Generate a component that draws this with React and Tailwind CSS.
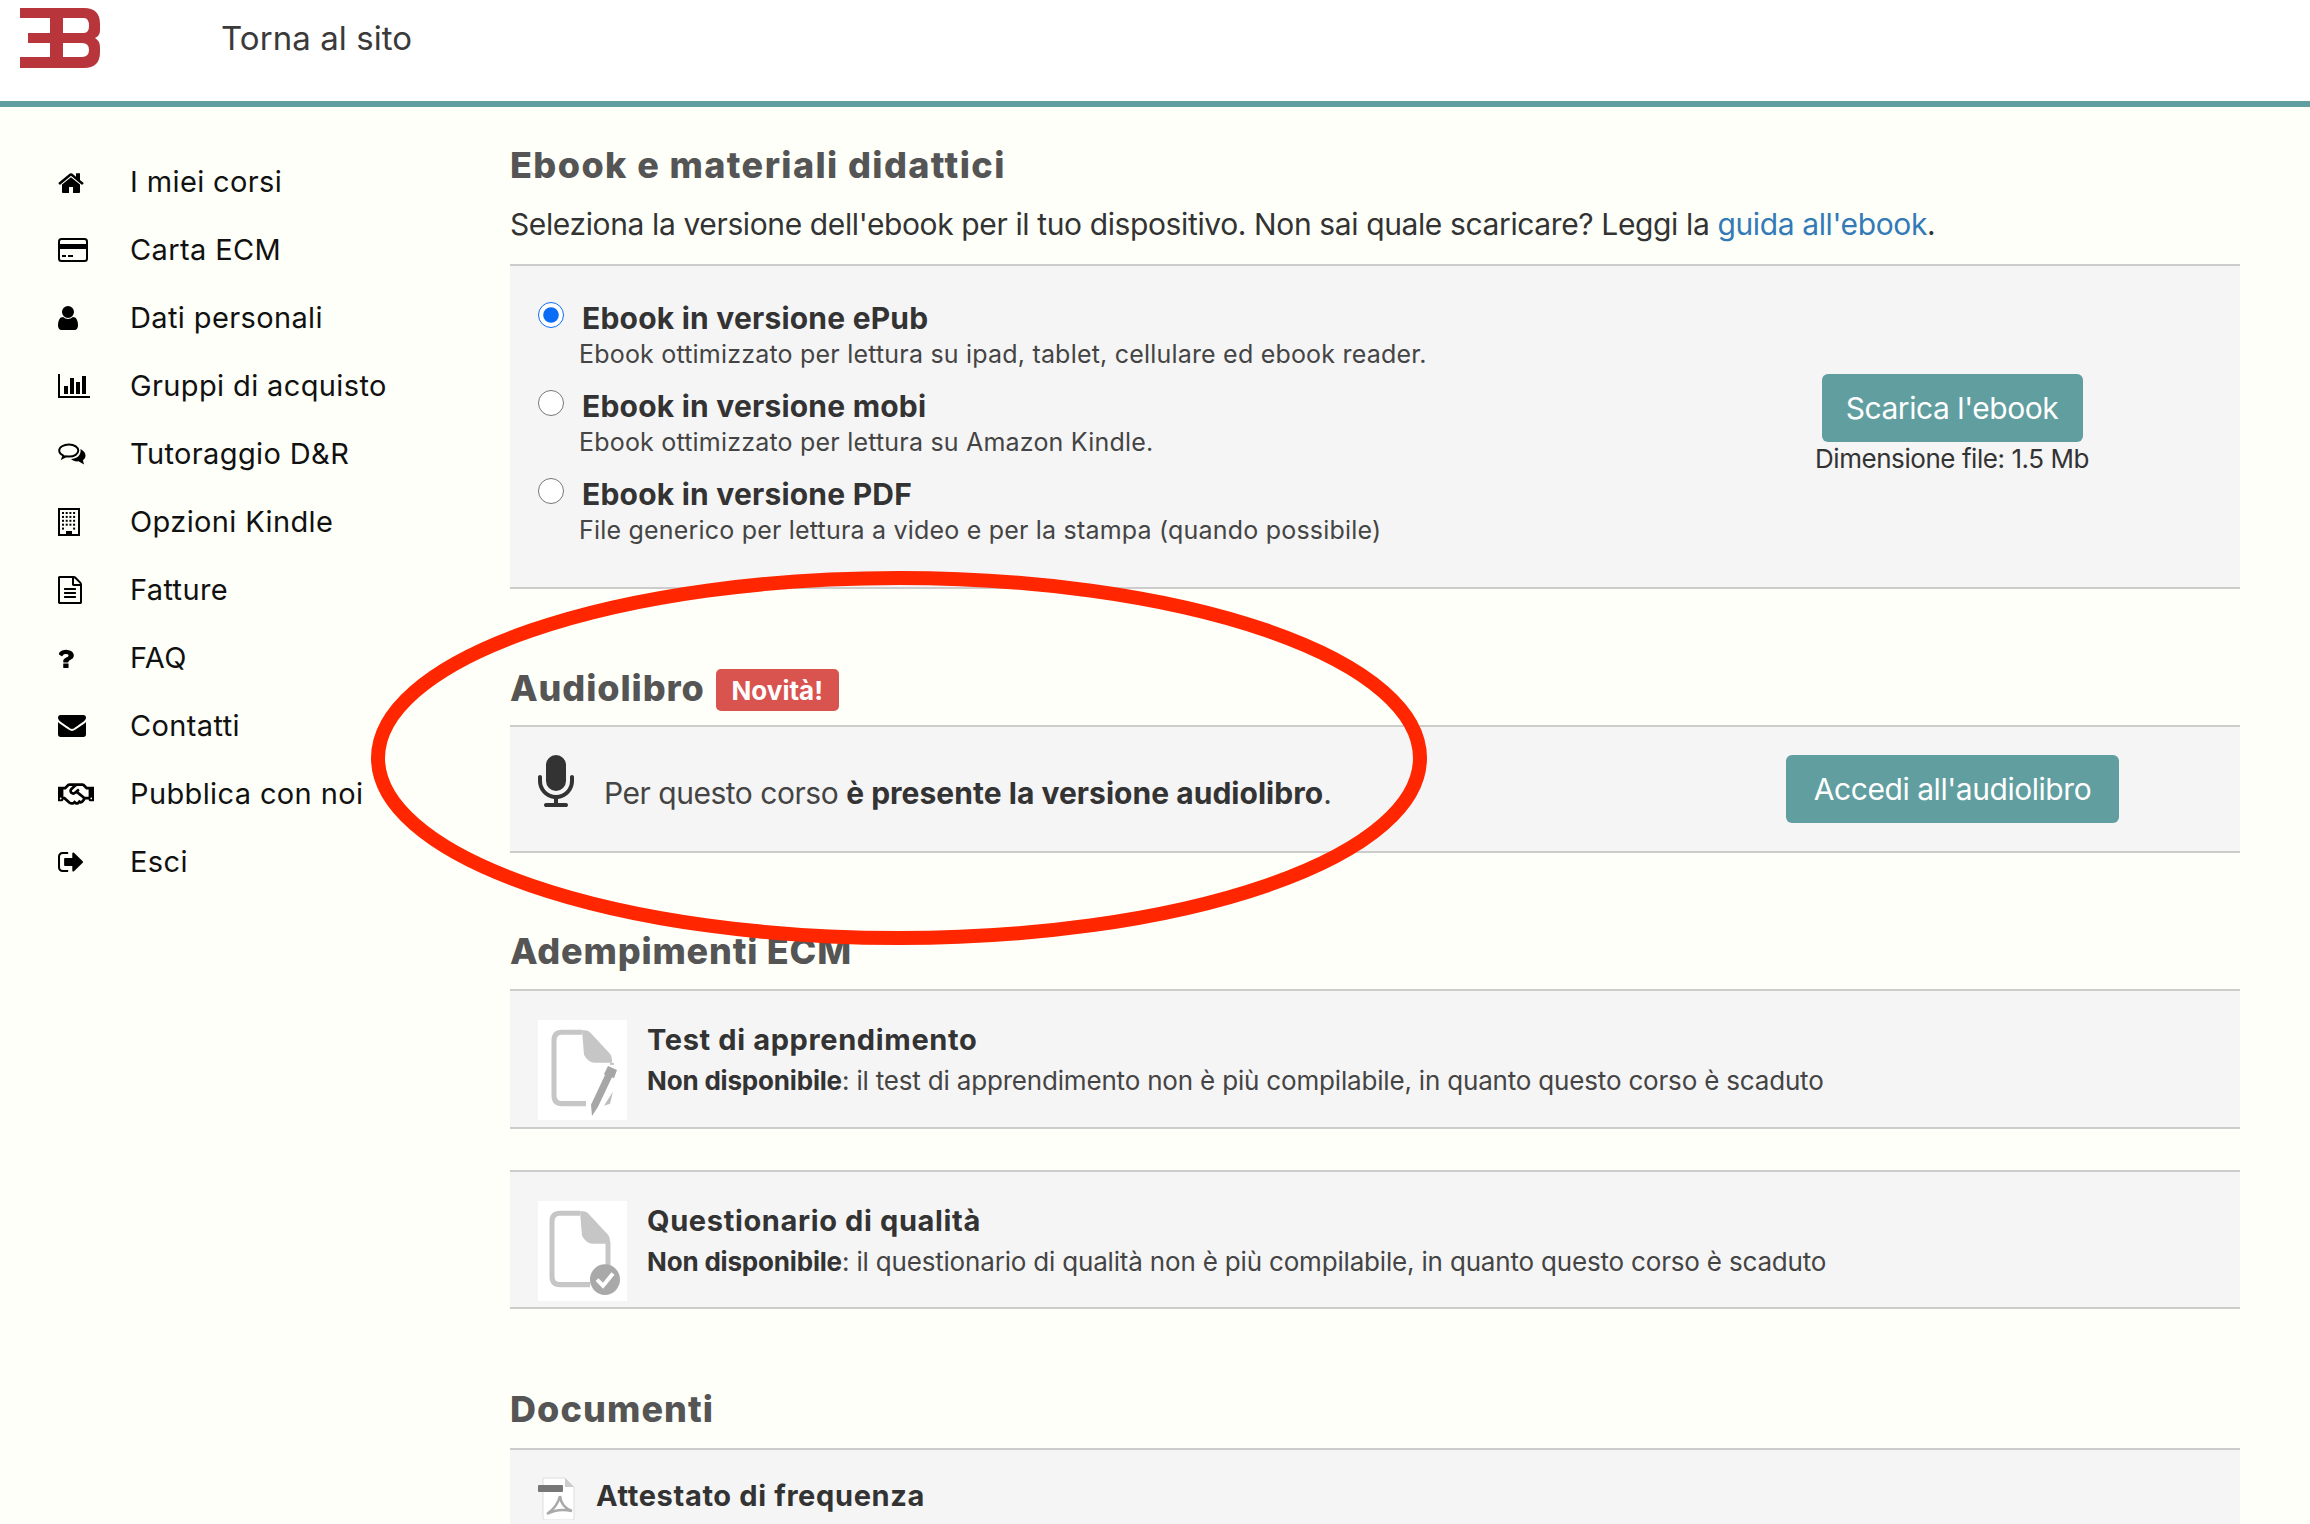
import React from 'react';
import { FaRegHandshake } from 'react-icons/fa';

// Font Awesome 4 style glyphs, drawn inline
const glyphs = {
    home: { box: '64 180 1664 1360', d: 'M1472 992v480q0 26-19 45t-45 19h-384v-384h-256v384h-384q-26 0-45-19t-19-45v-480q0-1 .5-3t.5-3l575-474 575 474q1 2 1 6zm223-69l-62 74q-8 9-21 11h-3q-13 0-21-7l-692-577-692 577q-12 8-24 7-13-2-21-11l-62-74q-8-10-7-23.5t11-21.5l719-599q32-26 76-26t76 26l244 204v-195q0-14 9-23t23-9h192q14 0 23 9t9 23v408l219 182q10 8 11 21.5t-7 23.5z' },
    user: { box: '256 128 1280 1536', d: 'M1536 1399q0 109-62.5 187t-150.5 78h-854q-88 0-150.5-78t-62.5-187q0-85 8.5-160.5t31.5-152 58.5-131 94-89 134.5-34.5q131 128 313 128t313-128q76 0 134.5 34.5t94 89 58.5 131 31.5 152 8.5 160.5zm-256-887q0 159-112.5 271.5t-271.5 112.5-271.5-112.5-112.5-271.5 112.5-271.5 271.5-112.5 271.5 112.5 112.5 271.5z' },
    chart: { box: '0 128 2048 1536', d: 'M640 896v512h-256v-512h256zm384-512v1024h-256v-1024h256zm1024 1152v128h-2048v-1536h128v1408h1920zm-640-896v768h-256v-768h256zm384-384v1152h-256v-1152h256z' },
    file: { box: '128 0 1536 1792', d: 'M1596 380q28 28 48 76t20 88v1152q0 40-28 68t-68 28h-1344q-40 0-68-28t-28-68v-1600q0-40 28-68t68-28h896q40 0 88 20t76 48zm-444-244v376h376q-10-29-22-41l-313-313q-12-12-41-22zm384 1528v-1024h-416q-40 0-68-28t-28-68v-416h-768v1536h1280zm-1024-864q0-14 9-23t23-9h704q14 0 23 9t9 23v64q0 14-9 23t-23 9h-704q-14 0-23-9t-9-23v-64zm736 224q14 0 23 9t9 23v64q0 14-9 23t-23 9h-704q-14 0-23-9t-9-23v-64q0-14 9-23t23-9h704zm0 256q14 0 23 9t9 23v64q0 14-9 23t-23 9h-704q-14 0-23-9t-9-23v-64q0-14 9-23t23-9h704z' },
    question: { box: '450 256 900 1400', d: 'M1024 1376v240q0 16-12 28t-28 12h-240q-16 0-28-12t-12-28v-240q0-16 12-28t28-12h240q16 0 28 12t12 28zm316-600q0 54-15.5 101t-35 76.5-55 59.5-57.5 43.5-61 35.5q-41 23-68.5 65t-27.5 67q0 17-12 32.5t-28 15.5h-240q-15 0-25.5-18.5t-10.5-37.5v-45q0-83 65-156.5t143-108.5q59-27 84-56t25-76q0-42-46.5-74t-107.5-32q-65 0-108 29-35 25-107 115-13 16-31 16-12 0-25-8l-164-125q-13-10-15.5-25t5.5-28q160-266 464-266 80 0 161 31t146 83 106 127.5 41 158.5z' },
    envelope: { box: '0 256 1792 1408', d: 'M1792 710v794q0 66-47 113t-113 47h-1472q-66 0-113-47t-47-113v-794q44 49 101 87 362 246 497 345 57 42 92.5 65.5t94.5 48 110 24.5h2q51 0 110-24.5t94.5-48 92.5-65.5q170-123 498-345 57-39 100-87zm0-294q0 79-49 151t-122 123q-376 261-468 325-10 7-42.5 30.5t-54 38-52 32.5-57.5 27-50 9h-2q-23 0-50-9t-57.5-27-52-32.5-54-38-42.5-30.5q-91-64-262-182.5t-205-142.5q-62-42-117-115.5t-55-136.5q0-78 41.5-130t118.5-52h1472q65 0 112.5 47t47.5 113z' },
    exit: { box: '64 256 1568 1280', d: 'M704 1440q0 4 1 20t.5 26.5-3 23.5-10 19.5-20.5 6.5h-320q-119 0-203.5-84.5t-84.5-203.5v-704q0-119 84.5-203.5t203.5-84.5h320q13 0 22.5 9.5t9.5 22.5q0 4 1 20t.5 26.5-3 23.5-10 19.5-20.5 6.5h-320q-66 0-113 47t-47 113v704q0 66 47 113t113 47h312l11.5 1 11.5 3 8 5.5 7 9 2 13.5zm928-544q0 26-19 45l-544 544q-19 19-45 19t-45-19-19-45v-288h-448q-26 0-45-19t-19-45v-384q0-26 19-45t45-19h448v-288q0-26 19-45t45-19 45 19l544 544q19 19 19 45z' },
    mic: { box: '320 0 1152 1664', d: 'M1472 704v128q0 221-147.5 384.5t-364.5 187.5v132h256q26 0 45 19t19 45-19 45-45 19h-640q-26 0-45-19t-19-45 19-45 45-19h256v-132q-217-24-364.5-187.5t-147.5-384.5v-128q0-26 19-45t45-19 45 19 19 45v128q0 185 131.5 316.5t316.5 131.5 316.5-131.5 131.5-316.5v-128q0-26 19-45t45-19 45 19 19 45zm-256-384v512q0 132-94 226t-226 94-226-94-94-226v-512q0-132 94-226t226-94 226 94 94 226z' },
};

const Glyph = ({ name, className }) => (
    <svg viewBox={glyphs[name].box} className={className} preserveAspectRatio="none" fill="currentColor">
        <path d={glyphs[name].d} />
    </svg>
);

const CardIcon = () => (
    <svg viewBox="0 0 30 24" className="w-[30px] h-[24px]" fill="none">
        <rect x="1" y="1" width="28" height="22" rx="2.5" stroke="#000" strokeWidth="2" />
        <rect x="1" y="6" width="28" height="5" fill="#000" />
        <rect x="4" y="17" width="4" height="2" fill="#000" />
        <rect x="10" y="17" width="5" height="2" fill="#000" />
    </svg>
);

const CommentsIcon = () => (
    <svg viewBox="0 0 28 22" className="w-[28px] h-[22px]" fill="none">
        <path d="M11 1.500C5.500 1.500 1.200 4.200 1.200 7.600c0 2.200 1.700 4 4.200 5.100L4.600 15l3.300-1.700c1 .2 2 .3 3.100.3 5.500 0 9.300-2.700 9.300-6S16.500 1.500 11 1.500z" stroke="#000" strokeWidth="2" />
        <path d="M22.500 6c3.300 1.700 5 4 5 6.500 0 2-1 3.600-2.600 4.800l1.100 4.200-5.500-3.200c-2.500.4-5.500-.2-7.500-2.300 5.500 0 10.500-3.500 9.500-10z" fill="#000" />
    </svg>
);

const BuildingIcon = () => {
    const dots = [];
    for (let r = 0; r < 5; r++) {
        for (let c = 0; c < 4; c++) {
            if (r === 4 && (c === 1 || c === 2)) continue;
            dots.push(<rect key={`${r}-${c}`} x={4 + c * 3.7} y={4 + r * 3.9} width="2" height="2" fill="#000" />);
        }
    }
    return (
        <svg viewBox="0 0 22 28" className="w-[22px] h-[28px]" fill="none">
            <rect x="1" y="1" width="20" height="26" stroke="#000" strokeWidth="2" />
            {dots}
            <rect x="8" y="23" width="6" height="4" fill="#000" />
        </svg>
    );
};

const Logo = () => (
    <svg viewBox="20 8 80 60" className="w-[80px] h-[60px]">
        <path
            fillRule="evenodd"
            fill="#b7353b"
            d="M20 8H84Q100 8 100 24V30Q100 36 95 38Q100 41 100 47V52Q100 68 84 68H20V57H50V43H28V33H50V18H20ZM63 18V33H84Q89 33 89 26Q89 18 84 18ZM63 43V57H82Q89 57 89 50Q89 43 82 43Z"
        />
    </svg>
);

const menu = [
    { label: 'I miei corsi', icon: <Glyph name="home" className="w-[26px] h-[21px]" /> },
    { label: 'Carta ECM', icon: <CardIcon /> },
    { label: 'Dati personali', icon: <Glyph name="user" className="w-[20px] h-[24px]" /> },
    { label: 'Gruppi di acquisto', icon: <Glyph name="chart" className="w-[32px] h-[24px]" /> },
    { label: 'Tutoraggio D&R', icon: <CommentsIcon /> },
    { label: 'Opzioni Kindle', icon: <BuildingIcon /> },
    { label: 'Fatture', icon: <Glyph name="file" className="w-[24px] h-[28px]" /> },
    { label: 'FAQ', icon: <Glyph name="question" className="w-[15px] h-[20px] ml-[1px]" /> },
    { label: 'Contatti', icon: <Glyph name="envelope" className="w-[28px] h-[22px]" /> },
    { label: 'Pubblica con noi', icon: <FaRegHandshake className="w-[36px] h-[30px]" /> },
    { label: 'Esci', icon: <Glyph name="exit" className="w-[25px] h-[20px]" /> },
];

const ebooks = [
    { title: 'Ebook in versione ePub', text: 'Ebook ottimizzato per lettura su ipad, tablet, cellulare ed ebook reader.', checked: true },
    { title: 'Ebook in versione mobi', text: 'Ebook ottimizzato per lettura su Amazon Kindle.' },
    { title: 'Ebook in versione PDF', text: 'File generico per lettura a video e per la stampa (quando possibile)' },
];

const DocBase = ({ children }) => (
    <svg viewBox="0 0 89 98" preserveAspectRatio="none" className="w-[89px] h-[100px] bg-white shrink-0" fill="none">
        <g className="blur-[0.6px]">{children}</g>
    </svg>
);

const TestIcon = () => (
    <DocBase>
        <path d="M44 12H24q-8 0-8 8v54q0 8 8 8h24" stroke="#c6c6c6" strokeWidth="5" />
        <path d="M44 10h3q3 0 5 2l20 21q2 2 2 6v3H58q-8 0-12-8z" fill="#c6c6c6" />
        <path d="M74 42v2" stroke="#c6c6c6" strokeWidth="4" />
        <path d="M70 45l9 4-3 8-2-1-14 29-6 9-1-11 14-29-1-1z" fill="#a6a6a6" />
        <path d="M60 62l-6 14" stroke="#fff" strokeWidth="1.500" />
        <path d="M75 70l-3 12-6 2z" fill="#bdbdbd" />
    </DocBase>
);

const QualityIcon = () => (
    <DocBase>
        <path d="M42 12H22q-8 0-8 8v54q0 8 8 8h30" stroke="#c6c6c6" strokeWidth="5" />
        <path d="M42 10h3q3 0 5 2l20 21q2 2 2 6v3H56q-8 0-12-8z" fill="#c6c6c6" />
        <path d="M70 40v24" stroke="#c6c6c6" strokeWidth="5" />
        <circle cx="67" cy="77" r="15" fill="#a9a9a9" />
        <path d="M59 77l6 6 10-12" stroke="#fff" strokeWidth="4" />
    </DocBase>
);

const PdfIcon = () => (
    <svg viewBox="0 0 38 43" className="w-[38px] h-[43px] shrink-0" fill="none">
        <path d="M5 1h22l9 9v31q0 2-2 2H7q-2 0-2-2z" fill="#fff" stroke="#ddd" />
        <path d="M27 1v9h9z" fill="#ccc" />
        <rect x="0" y="8" width="25" height="7" rx="1" fill="#777" />
        <path d="M22 19c-2 8-7 14-13 18M22 19c1 8 6 13 12 15M9 37c7-4 16-5 25-3" stroke="#aaa" strokeWidth="2.500" />
    </svg>
);

const Heading = ({ children, className = '' }) => (
    <h2 className={`text-[36px] font-extrabold text-[#555] leading-[40px] ${className}`}>{children}</h2>
);

const ActivityRow = ({ icon, title, text, className = '' }) => (
    <div className={`flex items-start gap-[20px] bg-[#f5f5f5] border-y-2 border-[#ccc] pl-[28px] pt-[29px] ${className}`}>
        {icon}
        <div>
            <div className="text-[29px] leading-[40px] font-bold text-[#333] tracking-[0.022em]">{title}</div>
            <p className="mt-[1px] text-[26px] leading-[40px] text-[#444] tracking-[-0.007em]">
                <b className="font-bold text-[#333]">Non disponibile</b>: {text}
            </p>
        </div>
    </div>
);

const Button = ({ children, className = '' }) => (
    <button className={`h-[68px] rounded-[6px] bg-[#619ea0] text-white text-[30px] tracking-[-0.015em] ${className}`}>{children}</button>
);

export default function App() {
    return (
        <div className="relative h-[1524px] overflow-hidden bg-[#fdfff8] font-['Inter','Liberation_Sans',sans-serif]">
            <header className="h-[107px] bg-white border-b-[6px] border-[#619ea0] flex items-start pl-[20px] pt-[8px]">
                <Logo />
                <a className="ml-[121px] mt-[10px] text-[33px] leading-[40px] text-[#3a3a3a] tracking-[0.002em]">Torna al sito</a>
            </header>

            <div className="flex">
                <nav className="w-[510px] shrink-0 pl-[58px] pt-[41px]">
                    {menu.map((item) => (
                        <div key={item.label} className="flex items-center h-[68px]">
                            <span className="w-[72px] flex items-center text-black">{item.icon}</span>
                            <span className="text-[29px] text-[#111] tracking-[0.013em]">{item.label}</span>
                        </div>
                    ))}
                </nav>

                <main className="w-[1730px] pt-[38px]">
                    <Heading className="tracking-[0.039em]">Ebook e materiali didattici</Heading>
                    <p className="mt-[19px] text-[30px] leading-[40px] text-[#333] tracking-[-0.0127em]">
                        Seleziona la versione dell'ebook per il tuo dispositivo. Non sai quale scaricare? Leggi la <a className="text-[#337ab7]">guida all'ebook</a>.
                    </p>
                    <section className="mt-[20px] h-[325px] bg-[#f5f5f5] border-y-2 border-[#ccc] flex justify-between">
                        <div className="pl-[28px] pt-[34px]">
                            {ebooks.map((e) => (
                                <div key={e.title} className="h-[88px]">
                                    <label className="flex items-center h-[36px]">
                                        <input type="radio" name="formato" defaultChecked={e.checked} className="w-[26px] h-[26px] m-0 -mt-[6px] accent-[#0b6cf5]" />
                                        <span className="ml-[18px] text-[30px] leading-[36px] font-bold text-[#333] tracking-[0.007em]">{e.title}</span>
                                    </label>
                                    <p className="ml-[41px] text-[25px] leading-[36px] text-[#444] tracking-[0.008em]">{e.text}</p>
                                </div>
                            ))}
                        </div>
                        <div className="w-[320px] mr-[128px] pt-[108px] flex flex-col items-center">
                            <Button className="w-[261px]">Scarica l'ebook</Button>
                            <span className="mt-[1px] text-[26px] leading-[32px] text-[#333] tracking-[-0.017em] whitespace-nowrap">Dimensione file: 1.5 Mb</span>
                        </div>
                    </section>

                    <div className="mt-[75px] flex items-center h-[48px]">
                        <Heading className="tracking-[0.025em]">Audiolibro</Heading>
                        <span className="ml-[11px] mt-[4px] w-[123px] h-[42px] rounded-[5px] bg-[#d9534f] text-white text-[26px] font-bold flex items-center justify-center">Novità!</span>
                    </div>
                    <section className="mt-[13px] h-[128px] bg-[#f5f5f5] border-y-2 border-[#ccc] flex pl-[28px] relative">
                        <Glyph name="mic" className="w-[36px] h-[52px] mt-[28px] text-[#333]" />
                        <p className="ml-[30px] mt-[46px] text-[30px] leading-[40px] text-[#444] tracking-[-0.016em]">
                            Per questo corso <b className="font-bold text-[#333] tracking-[0.001em]">è presente la versione audiolibro</b>.
                        </p>
                        <Button className="w-[333px] ml-auto mr-[121px] mt-[28px]">Accedi all'audiolibro</Button>
                    </section>

                    <Heading className="mt-[78px] tracking-[0.022em]">Adempimenti ECM</Heading>
                    <ActivityRow
                        className="mt-[18px] h-[140px]"
                        icon={<TestIcon />}
                        title="Test di apprendimento"
                        text="il test di apprendimento non è più compilabile, in quanto questo corso è scaduto"
                    />
                    <ActivityRow
                        className="mt-[41px] h-[139px]"
                        icon={<QualityIcon />}
                        title="Questionario di qualità"
                        text="il questionario di qualità non è più compilabile, in quanto questo corso è scaduto"
                    />

                    <Heading className="mt-[80px] tracking-[0.03em]">Documenti</Heading>
                    <section className="mt-[19px] h-[120px] bg-[#f5f5f5] border-t-2 border-[#ccc] flex items-start gap-[20px] pl-[28px] pt-[27px]">
                        <PdfIcon />
                        <span className="mt-[-1px] text-[29px] leading-[40px] font-bold text-[#333] tracking-[0.022em]">Attestato di frequenza</span>
                    </section>
                </main>
            </div>

            {/* red hand drawn ring on top of the page */}
            <svg className="absolute left-0 top-0 pointer-events-none" width="2310" height="1524" fill="none">
                <ellipse cx="899" cy="758" rx="521" ry="180" stroke="#ff2600" strokeWidth="14" />
            </svg>
        </div>
    );
}
